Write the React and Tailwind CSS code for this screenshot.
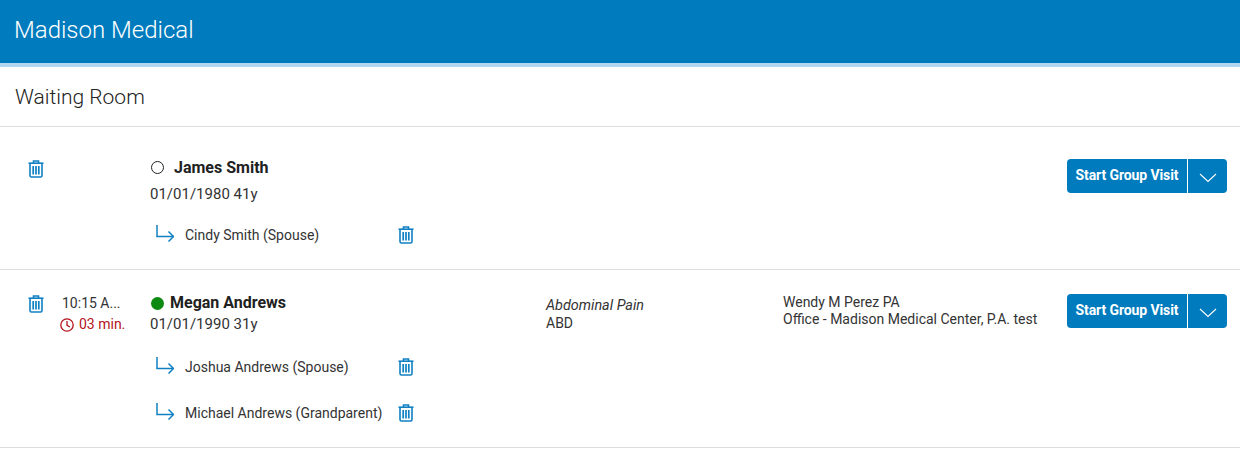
const Trash = () => (
  <svg width="16" height="18" viewBox="0 0 16 18" fill="none" stroke="#1080c2" strokeWidth="1.6" className="block shrink-0">
    <path d="M0.5 3.2H15.5" />
    <path d="M5.5 3V1H10.5V3" />
    <path d="M2 3.5V15.6C2 16.4 2.6 17 3.4 17H12.6C13.4 17 14 16.4 14 15.6V3.5" />
    <path d="M5.2 6V14.5M8 6V14.5M10.8 6V14.5" strokeWidth="1.7" />
  </svg>
);

const Arrow = () => (
  <svg width="18" height="17" viewBox="0 0 18 17" fill="none" stroke="#1080c2" strokeWidth="1.5" className="block">
    <path d="M1 0V11.5H17.5" />
    <path d="M12.5 6.5L17.5 11.5L12.5 16.5" />
  </svg>
);

const Clock = () => (
  <svg width="14" height="14" viewBox="0 0 14 14" fill="none" stroke="#b5121b" strokeWidth="1.3" className="block">
    <circle cx="7" cy="7" r="6.2" />
    <path d="M7 3V7.4L10 9" />
  </svg>
);

const Chevron = () => (
  <svg width="18" height="10" viewBox="0 0 18 10" fill="none" stroke="#ffffff" strokeWidth="1.1" className="block">
    <path d="M1 1L9 8.5L17 1" />
  </svg>
);

const GroupButton = () => (
  <div className="flex h-[34px] w-[160px] overflow-hidden rounded-[4px] bg-[#007bbd] text-white">
    <div className="flex w-[121px] items-center justify-center border-r border-white pb-[2px] text-[14px] font-bold tracking-[-0.1px]">
      Start Group Visit
    </div>
    <div className="flex flex-1 items-center justify-center pt-[3px]">
      <Chevron />
    </div>
  </div>
);

const Member = ({ label }) => (
  <div className="flex h-[46px] items-center">
    <div className="-mt-[5px] ml-[6px] w-[29px]">
      <Arrow />
    </div>
    <span className="w-[213px] text-[14px] whitespace-nowrap text-[#333333]">{label}</span>
    <div className="-mt-[2px]">
      <Trash />
    </div>
  </div>
);

export default function App() {
  return (
    <div className="min-h-[467px] bg-white font-['Roboto',sans-serif] text-[14px] text-[#212121]">
      <header className="flex h-[67px] items-center border-b-4 border-[#b3d7ee] bg-[#007bbd] px-[14px] pb-[3px] text-[24px] font-light text-white">
        Madison Medical
      </header>
      <div className="flex h-[60px] items-center border-b border-[#dddddd] px-[15px] pt-[2px] text-[21px] font-light text-[#222222]">
        Waiting Room
      </div>

      <section className="flex h-[143px] border-b border-[#dddddd]">
        <div className="w-[150px] pt-[33px] pl-[28px]">
          <Trash />
        </div>
        <div className="w-[917px] pt-[30px]">
          <div className="flex h-[22px] items-center">
            <span className="mb-[2px] ml-[1px] h-[13px] w-[13px] rounded-full border-[1.5px] border-[#222222]" />
            <span className="ml-[10px] text-[16px] font-bold">James Smith</span>
          </div>
          <div className="mt-[4px] text-[15px] text-[#333333]">01/01/1980 41y</div>
          <div className="mt-[7px]">
            <Member label="Cindy Smith (Spouse)" />
          </div>
        </div>
        <div className="pt-[32px]">
          <GroupButton />
        </div>
      </section>

      <section className="flex h-[178px] border-b border-[#dddddd]">
        <div className="flex w-[150px] pt-[26px] pl-[28px]">
          <div className="-mt-[1px]">
            <Trash />
          </div>
          <div className="ml-[16px] w-[82px]">
            <div className="h-[18px] pl-[2px] leading-[15px] text-[#333333]">10:15 A...</div>
            <div className="flex items-center gap-[5px] text-[#b5121b]">
              <Clock />
              <span>03 min.</span>
            </div>
          </div>
        </div>
        <div className="w-[396px] pt-[22px]">
          <div className="flex h-[22px] items-center">
            <span className="ml-[1px] h-[13px] w-[13px] rounded-full bg-[#0d8a12]" />
            <span className="ml-[6px] text-[16px] font-bold">Megan Andrews</span>
          </div>
          <div className="-mt-[1px] text-[15px] text-[#333333]">01/01/1990 31y</div>
          <div className="mt-[9px]">
            <Member label="Joshua Andrews (Spouse)" />
            <Member label="Michael Andrews (Grandparent)" />
          </div>
        </div>
        <div className="w-[237px] pt-[27px] text-[14px] leading-[17px] text-[#333333]">
          <div className="h-[18px] text-[14.4px] italic">Abdominal Pain</div>
          <div>ABD</div>
        </div>
        <div className="w-[284px] pt-[24px] text-[14px] leading-[17px] text-[#333333]">
          <div>Wendy M Perez PA</div>
          <div>Office - Madison Medical Center, P.A. test</div>
        </div>
        <div className="pt-[24px]">
          <GroupButton />
        </div>
      </section>
    </div>
  );
}
